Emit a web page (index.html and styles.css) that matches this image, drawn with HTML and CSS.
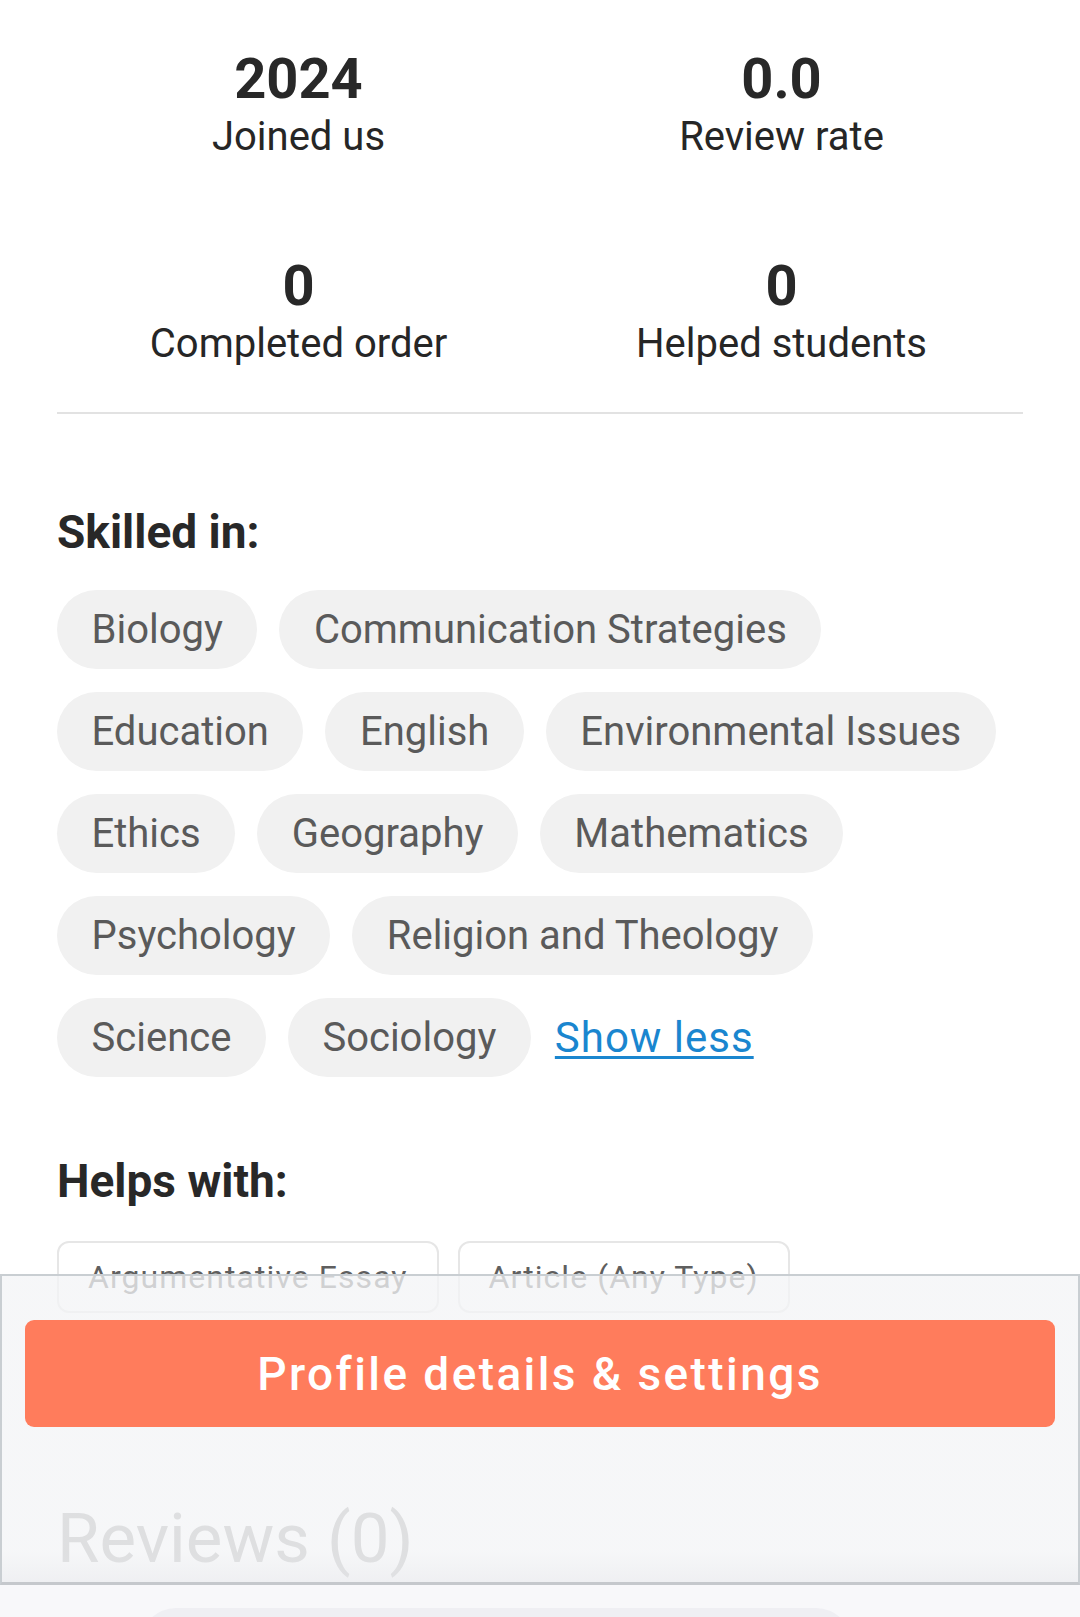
FILE: index.html
```html
<!DOCTYPE html>
<html lang="en">
<head>
<meta charset="utf-8">
<title>Profile</title>
<link rel="stylesheet" href="styles.css">
</head>
<body>
<div class="screen">
  <main class="content">
    <section class="stats">
      <div class="stat"><div class="stat-num">2024</div><div class="stat-label">Joined us</div></div>
      <div class="stat"><div class="stat-num">0.0</div><div class="stat-label">Review rate</div></div>
      <div class="stat"><div class="stat-num">0</div><div class="stat-label">Completed order</div></div>
      <div class="stat"><div class="stat-num">0</div><div class="stat-label">Helped students</div></div>
    </section>
    <hr class="divider">

    <h2 class="section-title skilled-title">Skilled in:</h2>
    <div class="chips">
      <span class="chip">Biology</span>
      <span class="chip">Communication Strategies</span>
      <span class="chip">Education</span>
      <span class="chip">English</span>
      <span class="chip">Environmental Issues</span>
      <span class="chip">Ethics</span>
      <span class="chip">Geography</span>
      <span class="chip">Mathematics</span>
      <span class="chip">Psychology</span>
      <span class="chip">Religion and Theology</span>
      <span class="chip">Science</span>
      <span class="chip">Sociology</span>
      <a class="show-less" href="#">Show less</a>
    </div>

    <h2 class="section-title helps-title">Helps with:</h2>
    <div class="outline-chips">
      <span class="outline-chip">Argumentative Essay</span>
      <span class="outline-chip">Article (Any Type)</span>
    </div>

    <h2 class="reviews-title">Reviews (0)</h2>
  </main>
  <section class="reviews-area">
    <div class="review-card"></div>
  </section>

  <div class="action-sheet">
    <button class="primary-btn" type="button">Profile details &amp; settings</button>
  </div>
</div>
</body>
</html>
```

FILE: styles.css
```css
html, body {
  margin: 0;
  padding: 0;
  background: #ffffff;
}

body {
  font-family: Roboto, "Noto Sans", "Liberation Sans", sans-serif;
  color: #262626;
  width: 1080px;
  height: 1617px;
  overflow: hidden;
}

.screen {
  position: relative;
  width: 1080px;
  min-height: 1617px;
}

.content {
  padding: 47px 57px 4px;
}

/* Stats */
.stats {
  display: grid;
  grid-template-columns: 1fr 1fr;
  row-gap: 92px;
}

.stat {
  text-align: center;
}

.stat-num {
  font-size: 56px;
  font-weight: 700;
  line-height: 64px;
  color: #282828;
}

.stat-label {
  font-size: 40px;
  line-height: 51px;
  color: #262626;
}

.divider {
  border: 0;
  height: 2px;
  background: #e2e2e2;
  margin: 43px 0 0;
}

/* Section titles */
.section-title {
  font-size: 46px;
  font-weight: 700;
  line-height: 54px;
  margin: 0;
  color: #282828;
}

.skilled-title {
  margin-top: 91px;
}

.helps-title {
  margin-top: 77px;
}

/* Skill chips */
.chips {
  display: flex;
  flex-wrap: wrap;
  align-items: center;
  column-gap: 22px;
  row-gap: 23px;
  margin-top: 31px;
}

.chip {
  display: inline-block;
  background: #f1f1f1;
  color: #5a5a5a;
  font-size: 40px;
  line-height: 47px;
  padding: 16px 34.5px;
  border-radius: 40px;
}

.show-less {
  color: #1a86cf;
  font-size: 42px;
  line-height: 47px;
  letter-spacing: 1px;
  text-decoration: underline;
  text-decoration-thickness: 3px;
  text-underline-offset: 4px;
  margin-left: 2px;
}

/* Outline chips */
.outline-chips {
  display: flex;
  flex-wrap: wrap;
  gap: 19px;
  margin-top: 33px;
}

.outline-chip {
  display: inline-block;
  border: 2px solid #e6e6e6;
  border-radius: 12px;
  color: #5f5f5f;
  font-size: 32px;
  line-height: 38px;
  padding: 15px 29px;
  letter-spacing: 1.05px;
}

/* Reviews */
.reviews-title {
  font-size: 69px;
  font-weight: 400;
  line-height: 80px;
  margin: 186px 0 0;
  color: #9c9c9c;
}

.reviews-area {
  background: #f8f8fa;
  padding: 25px 0 0 140px;
  height: 40px;
}

.review-card {
  width: 712px;
  height: 60px;
  background: #efeff3;
  border-radius: 36px 36px 0 0;
}

/* Bottom action sheet overlaying content */
.action-sheet {
  position: absolute;
  top: 1274px;
  left: 0;
  width: 1080px;
  height: 311px;
  box-sizing: border-box;
  border: 2px solid #c9ced2;
  border-bottom-width: 3px;
  border-bottom-color: #c5c8cc;
  background: linear-gradient(to bottom, rgba(243, 244, 246, 0.76) 90%, rgba(236, 237, 240, 0.85) 100%);
  padding: 44px 23px 0;
}

.primary-btn {
  display: block;
  width: 100%;
  height: 107px;
  border: 0;
  border-radius: 9px;
  background: #ff7c5c;
  color: #ffffff;
  font-family: Roboto, "Noto Sans", "Liberation Sans", sans-serif;
  font-size: 46px;
  font-weight: 500;
  letter-spacing: 2.4px;
  cursor: pointer;
}
```
